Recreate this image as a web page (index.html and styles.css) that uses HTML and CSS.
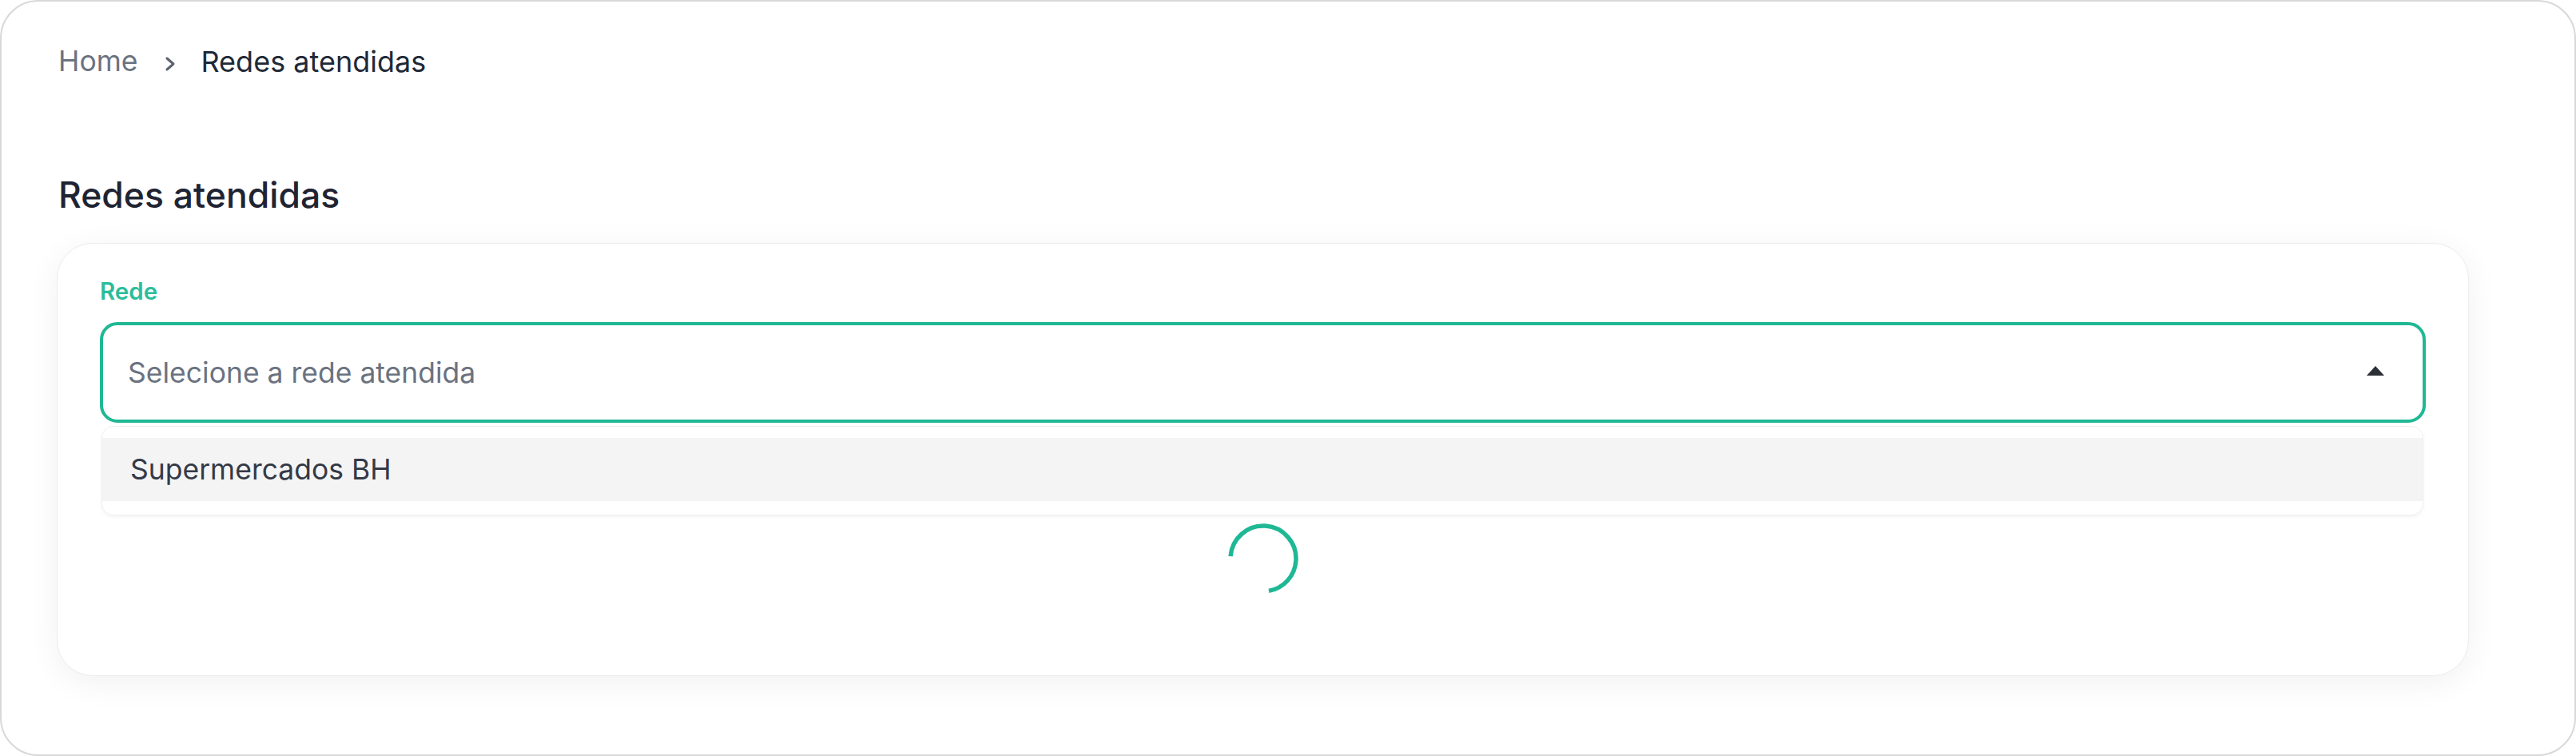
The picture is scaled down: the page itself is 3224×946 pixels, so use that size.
FILE: index.html
```html
<!DOCTYPE html>
<html lang="pt-BR">
<head>
  <meta charset="UTF-8" />
  <title>Redes atendidas</title>
  <link rel="stylesheet" href="styles.css">
</head>
<body>
  <div class="frame">
    <nav class="breadcrumb">
      <a class="crumb-link" href="#">Home</a>
      <svg class="crumb-sep" width="16" height="20" viewBox="0 0 16 20">
        <path d="M4 3 L12 10 L4 17" fill="none" stroke="#5b6270" stroke-width="3" stroke-linecap="round" stroke-linejoin="round"/>
      </svg>
      <span class="crumb-current">Redes atendidas</span>
    </nav>

    <h1 class="page-title">Redes atendidas</h1>

    <section class="card">
      <label class="field-label" for="rede">Rede</label>
      <div class="select open" id="rede">
        <span class="select-placeholder">Selecione a rede atendida</span>
        <span class="select-arrow"></span>
      </div>
      <ul class="select-menu">
        <li class="select-option hover">Supermercados BH</li>
      </ul>

      <div class="loader">
        <svg width="88" height="88" viewBox="0 0 88 88">
          <circle cx="44" cy="44" r="41" fill="none" stroke="#1fb895" stroke-width="5.5"
                  stroke-dasharray="183 75" transform="rotate(184 44 44)"/>
        </svg>
      </div>
    </section>
  </div>
</body>
</html>
```

FILE: styles.css
```css
html, body {
  margin: 0;
  background: #fff;
}
body {
  font-family: Inter, "Noto Sans", sans-serif;
  color: #1f2937;
}
.frame {
  box-sizing: border-box;
  width: 3224px;
  height: 946px;
  border: 2px solid #d8d8d8;
  border-radius: 48px;
  padding: 49px 132px 0 69px;
}

/* breadcrumb */
.breadcrumb {
  display: flex;
  align-items: center;
  margin-left: 2px;
  font-size: 35.5px;
  line-height: 52px;
}
.crumb-link {
  color: #6b7280;
  text-decoration: none;
}
.crumb-sep {
  margin: 6px 30px 0 33px;
}
.crumb-current {
  font-size: 36px;
  color: #1f2937;
}

.page-title {
  margin: 111px 0 30px 2px;
  font-size: 44.5px;
  line-height: 60px;
  font-weight: 500;
  color: #1f2433;
}

/* card */
.card {
  border: 1px solid #ececec;
  border-radius: 45px;
  background: #fff;
  box-shadow: 0 8px 40px rgba(0, 0, 0, 0.06);
  padding: 41px 53px 102px;
}
.field-label {
  display: block;
  font-size: 29.5px;
  line-height: 36px;
  font-weight: 600;
  color: #2bbd9c;
  margin-bottom: 21px;
}
.select {
  box-sizing: border-box;
  height: 126px;
  border: 4px solid #20b894;
  border-radius: 22px;
  display: flex;
  align-items: center;
  justify-content: space-between;
  padding: 0 48px 0 31px;
}
.select-placeholder {
  font-size: 35.5px;
  color: #6b7280;
}
.select-arrow {
  width: 0;
  height: 0;
  border-left: 11px solid transparent;
  border-right: 11px solid transparent;
  border-bottom: 12px solid #2d2f36;
  margin-top: -4px;
}
.select-menu {
  list-style: none;
  margin: 4px 3px 0 2px;
  padding: 14px 0 17px;
  border: 1px solid #f0f0f0;
  border-radius: 15px;
  box-shadow: 0 2px 4px rgba(0, 0, 0, 0.05);
}
.select-option {
  height: 79px;
  display: flex;
  align-items: center;
  padding-left: 35px;
  font-size: 35.5px;
  color: #343a46;
}
.select-option.hover {
  background: #f4f4f5;
}

.loader {
  display: flex;
  justify-content: center;
  margin-top: 10px;
}
.loader svg {
  display: block;
}
```
